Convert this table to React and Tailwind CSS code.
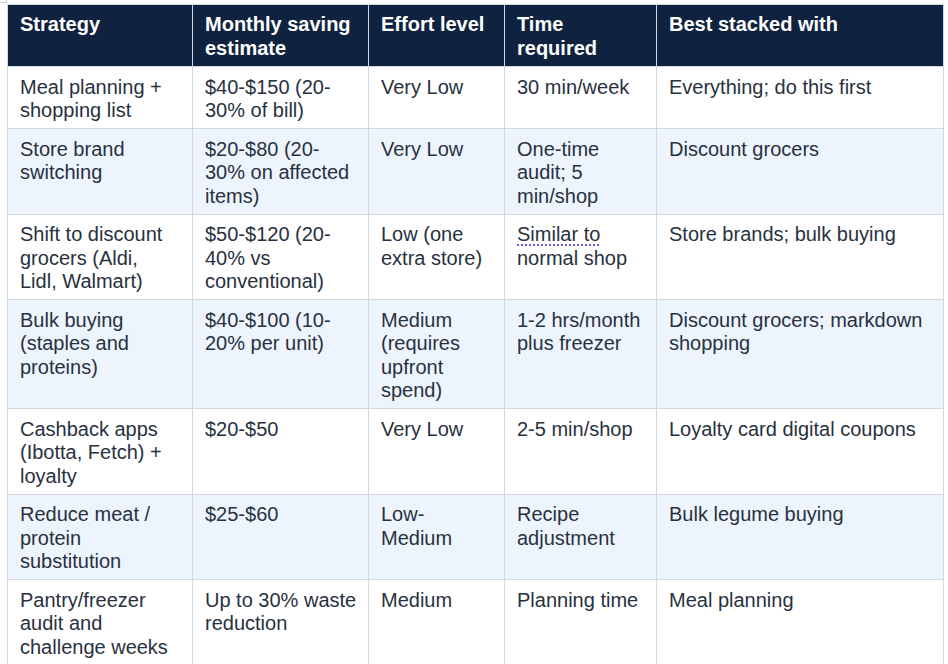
// each cell is a list of lines, broken as in the source document
const rows = [
  [['Meal planning +', 'shopping list'], ['$40-$150 (20-', '30% of bill)'], ['Very Low'], ['30 min/week'], ['Everything; do this first']],
  [['Store brand', 'switching'], ['$20-$80 (20-', '30% on affected', 'items)'], ['Very Low'], ['One-time', 'audit; 5', 'min/shop'], ['Discount grocers']],
  [['Shift to discount', 'grocers (Aldi,', 'Lidl, Walmart)'], ['$50-$120 (20-', '40% vs', 'conventional)'], ['Low (one', 'extra store)'], ['SIMILAR', 'normal shop'], ['Store brands; bulk buying']],
  [['Bulk buying', '(staples and', 'proteins)'], ['$40-$100 (10-', '20% per unit)'], ['Medium', '(requires', 'upfront', 'spend)'], ['1-2 hrs/month', 'plus freezer'], ['Discount grocers; markdown', 'shopping']],
  [['Cashback apps', '(Ibotta, Fetch) +', 'loyalty'], ['$20-$50'], ['Very Low'], ['2-5 min/shop'], ['Loyalty card digital coupons']],
  [['Reduce meat /', 'protein', 'substitution'], ['$25-$60'], ['Low-', 'Medium'], ['Recipe', 'adjustment'], ['Bulk legume buying']],
  [['Pantry/freezer', 'audit and', 'challenge weeks'], ['Up to 30% waste', 'reduction'], ['Medium'], ['Planning time'], ['Meal planning']],
];

const headers = [
  ['Strategy'],
  ['Monthly saving', 'estimate'],
  ['Effort level'],
  ['Time', 'required'],
  ['Best stacked with'],
];
const widths = ['w-[185px]', 'w-[176px]', 'w-[136px]', 'w-[152px]', 'w-[287px]'];

function Lines({ lines }) {
  return lines.map((line, i) => (
    <div key={i} className="whitespace-nowrap">
      {line === 'SIMILAR' ? (
        <span className="underline decoration-dotted decoration-[#6a5ae0] decoration-2 underline-offset-[3px]">
          Similar to
        </span>
      ) : (
        line
      )}
    </div>
  ));
}

export default function App() {
  return (
    <div className="relative min-h-[664px] bg-white pl-[7px] pt-[4px] font-['Liberation_Sans',Arial,sans-serif]">
      <div className="absolute left-0 top-0 h-[3px] w-[7px] border-b border-r border-[#c8ccd2]" />
      <table className="w-[937px] table-fixed border-collapse text-[20px] leading-[23.5px]">
        <thead>
          <tr className="bg-[#0f2340] text-white">
            {headers.map((h, i) => (
              <th
                key={i}
                className={`${widths[i]} border border-[#d3d7de] px-[12px] pb-[6px] pt-[8px] text-left align-top font-bold`}
              >
                <Lines lines={h} />
              </th>
            ))}
          </tr>
        </thead>
        <tbody>
          {rows.map((r, ri) => (
            <tr key={ri} className={ri % 2 === 1 ? 'bg-[#eef4fd]' : 'bg-white'}>
              {r.map((c, ci) => (
                <td
                  key={ci}
                  className="overflow-hidden border border-[#d3d7de] px-[12px] pb-[5.5px] pt-[8.5px] align-top text-[#283140]"
                >
                  <Lines lines={c} />
                </td>
              ))}
            </tr>
          ))}
        </tbody>
      </table>
    </div>
  );
}
